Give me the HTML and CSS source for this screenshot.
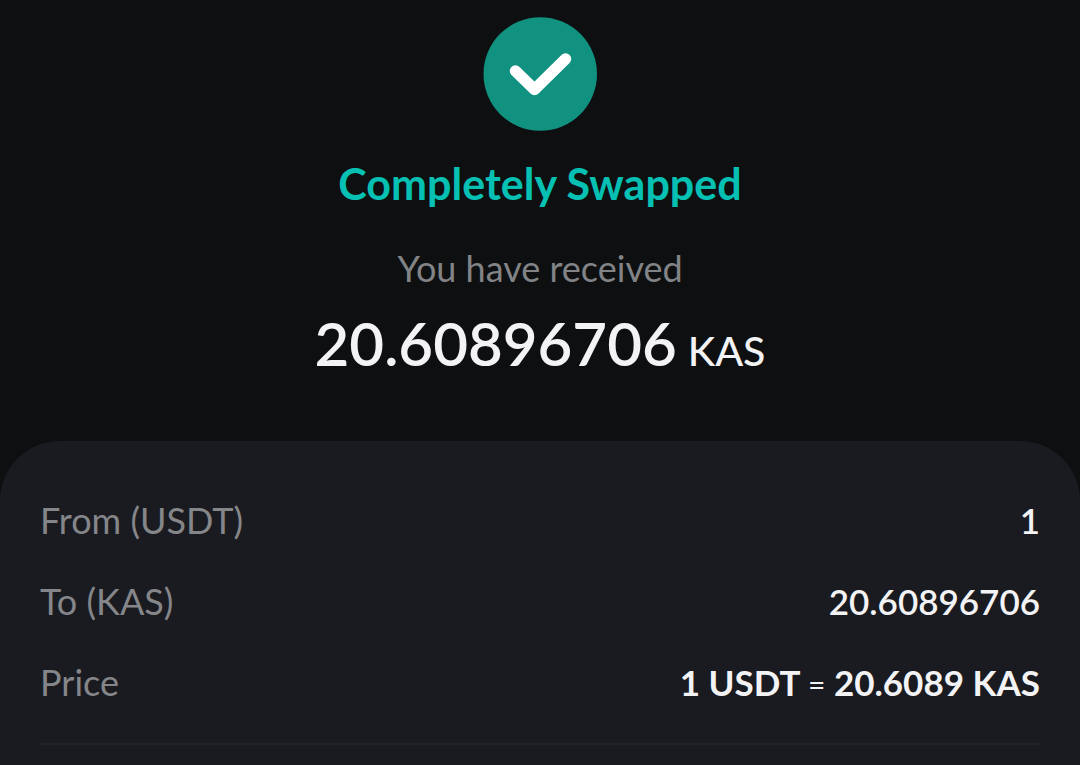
FILE: index.html
```html
<!DOCTYPE html>
<html lang="en">
<head>
<meta charset="utf-8">
<meta name="viewport" content="width=device-width, initial-scale=1">
<title>Completely Swapped</title>
<link rel="stylesheet" href="styles.css">
</head>
<body>
<main class="page">
  <section class="summary">
    <svg class="status-icon" viewBox="0 0 114 114" aria-hidden="true">
      <circle cx="57.250" cy="57" r="56.750" fill="#119180"/>
      <path d="M32.500 54 L51.500 72.500 L82.500 42" fill="none" stroke="#fff" stroke-width="11.500" stroke-linecap="round" stroke-linejoin="round"/>
    </svg>
    <h1 class="status">Completely Swapped</h1>
    <p class="caption">You have received</p>
    <p class="amount">20.60896706 <span class="unit">KAS</span></p>
  </section>
  <section class="details">
    <dl class="rows">
      <div class="row"><dt>From (USDT)</dt><dd>1</dd></div>
      <div class="row"><dt>To (KAS)</dt><dd>20.60896706</dd></div>
      <div class="row"><dt>Price</dt><dd class="price">1 USDT <span class="equals">=</span> 20.6089 KAS</dd></div>
    </dl>
  </section>
</main>
</body>
</html>
```
FILE: styles.css
```css
* {
  box-sizing: border-box;
}

body,
h1,
p,
dl,
dd {
  margin: 0;
}

body {
  background: #0d0f10;
  color: #f3f3f5;
  font-family: Lato, "Open Sans", sans-serif;
}

.page {
  display: flex;
  flex-direction: column;
  min-height: 100vh;
}

.summary {
  display: flex;
  flex-direction: column;
  align-items: center;
  padding: 17px 20px 56px;
}

.status-icon {
  width: 114px;
  height: 114px;
}

.status {
  margin-top: 29px;
  color: #06c0b3;
  font-size: 43px;
  font-weight: 700;
  line-height: 48px;
}

.caption {
  margin-top: 36px;
  color: #828386;
  font-size: 36px;
  line-height: 48px;
}

.amount {
  display: flex;
  align-items: baseline;
  gap: 11px;
  margin-top: 17px;
  font-size: 60px;
  font-weight: 600;
  line-height: 68px;
}

.unit {
  font-size: 41px;
  font-weight: 500;
}

.details {
  flex: 1;
  padding: 55px 40px 20px;
  border-radius: 60px 60px 0 0;
  background: #1a1b20;
}

.rows {
  display: grid;
  gap: 33px;
  padding-bottom: 37px;
  border-bottom: 2px solid #222329;
}

.row {
  display: flex;
  justify-content: space-between;
  font-size: 36px;
  line-height: 48px;
}

.row dt {
  color: #85868a;
}

.row dd {
  font-size: 35px;
  font-weight: 600;
}

.row .price {
  font-weight: 700;
}

.equals {
  font-size: 30px;
  font-weight: 400;
  line-height: 1;
}
```
